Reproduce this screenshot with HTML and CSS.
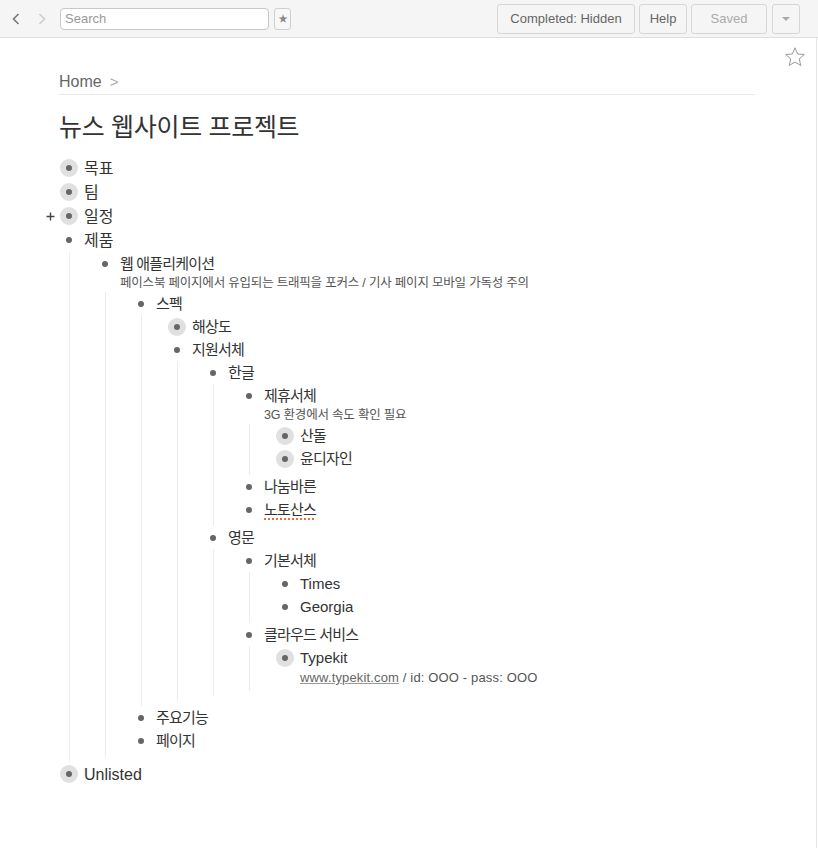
FILE: index.html
```html
<!DOCTYPE html>
<html lang="ko">
<head>
    <meta charset="UTF-8">
    <meta name="viewport" content="width=device-width, initial-scale=1.0">
    <title>뉴스 웹사이트 프로젝트</title>
    <link rel="stylesheet" href="styles.css">
</head>
<body>
    <div class="toolbar">
        <svg class="nav-arrow back" width="8" height="12" viewBox="0 0 8 12"><path d="M6.5 1 L1.5 6 L6.5 11" fill="none" stroke="#777" stroke-width="1.6"/></svg>
        <svg class="nav-arrow forward" width="8" height="12" viewBox="0 0 8 12"><path d="M1.5 1 L6.5 6 L1.5 11" fill="none" stroke="#ccc" stroke-width="1.6"/></svg>
        <input class="search" type="text" placeholder="Search">
        <button class="star-btn">★</button>
        <div class="toolbar-buttons">
            <button class="btn btn-completed">Completed: Hidden</button>
            <button class="btn btn-help">Help</button>
            <button class="btn btn-saved">Saved</button>
            <button class="btn btn-menu"><span class="caret"></span></button>
        </div>
    </div>

    <div class="page">
        <svg class="page-star" width="22" height="22" viewBox="0 0 22 22"><path d="M11 1.8 L13.6 8 L20.3 8.5 L15.2 12.9 L16.8 19.5 L11 16 L5.2 19.5 L6.8 12.9 L1.7 8.5 L8.4 8 Z" fill="none" stroke="#999" stroke-width="1" stroke-linejoin="round"/></svg>

        <div class="content">
            <div class="breadcrumb">
                <span class="crumb">Home</span><span class="crumb-sep">&gt;</span>
            </div>
            <h1 class="title">뉴스 웹사이트 프로젝트</h1>

            <div class="tree">
                <div class="item">
                    <div class="row"><span class="bullet collapsed"></span><span class="name">목표</span></div>
                </div>
                <div class="item">
                    <div class="row"><span class="bullet collapsed"></span><span class="name">팀</span></div>
                </div>
                <div class="item">
                    <div class="row">
                        <svg class="expand" width="9" height="9" viewBox="0 0 9 9"><path d="M4.5 0.5 V8.5 M0.5 4.5 H8.5" stroke="#444" stroke-width="1.4"/></svg>
                        <span class="bullet collapsed"></span><span class="name">일정</span>
                    </div>
                </div>
                <div class="item">
                    <div class="row"><span class="bullet"></span><span class="name">제품</span></div>
                    <div class="children">
                        <div class="item">
                            <div class="row"><span class="bullet"></span><span class="name">웹 애플리케이션</span></div>
                            <div class="note">페이스북 페이지에서 유입되는 트래픽을 포커스 / 기사 페이지 모바일 가독성 주의</div>
                            <div class="children">
                                <div class="item">
                                    <div class="row"><span class="bullet"></span><span class="name">스펙</span></div>
                                    <div class="children">
                                        <div class="item">
                                            <div class="row"><span class="bullet collapsed"></span><span class="name">해상도</span></div>
                                        </div>
                                        <div class="item">
                                            <div class="row"><span class="bullet"></span><span class="name">지원서체</span></div>
                                            <div class="children">
                                                <div class="item">
                                                    <div class="row"><span class="bullet"></span><span class="name">한글</span></div>
                                                    <div class="children">
                                                        <div class="item">
                                                            <div class="row"><span class="bullet"></span><span class="name">제휴서체</span></div>
                                                            <div class="note">3G 환경에서 속도 확인 필요</div>
                                                            <div class="children">
                                                                <div class="item">
                                                                    <div class="row"><span class="bullet collapsed"></span><span class="name">산돌</span></div>
                                                                </div>
                                                                <div class="item">
                                                                    <div class="row"><span class="bullet collapsed"></span><span class="name">윤디자인</span></div>
                                                                </div>
                                                            </div>
                                                        </div>
                                                        <div class="item">
                                                            <div class="row"><span class="bullet"></span><span class="name">나눔바른</span></div>
                                                        </div>
                                                        <div class="item">
                                                            <div class="row"><span class="bullet"></span><span class="name"><span class="misspelled">노토산스</span></span></div>
                                                        </div>
                                                    </div>
                                                </div>
                                                <div class="item">
                                                    <div class="row"><span class="bullet"></span><span class="name">영문</span></div>
                                                    <div class="children">
                                                        <div class="item">
                                                            <div class="row"><span class="bullet"></span><span class="name">기본서체</span></div>
                                                            <div class="children">
                                                                <div class="item">
                                                                    <div class="row"><span class="bullet"></span><span class="name latin">Times</span></div>
                                                                </div>
                                                                <div class="item">
                                                                    <div class="row"><span class="bullet"></span><span class="name latin">Georgia</span></div>
                                                                </div>
                                                            </div>
                                                        </div>
                                                        <div class="item">
                                                            <div class="row"><span class="bullet"></span><span class="name">클라우드 서비스</span></div>
                                                            <div class="children">
                                                                <div class="item">
                                                                    <div class="row"><span class="bullet collapsed"></span><span class="name latin">Typekit</span></div>
                                                                    <div class="note latin"><a class="note-link" href="#">www.typekit.com</a> / id: OOO - pass: OOO</div>
                                                                </div>
                                                            </div>
                                                        </div>
                                                    </div>
                                                </div>
                                            </div>
                                        </div>
                                    </div>
                                </div>
                                <div class="item">
                                    <div class="row"><span class="bullet"></span><span class="name">주요기능</span></div>
                                </div>
                                <div class="item">
                                    <div class="row"><span class="bullet"></span><span class="name">페이지</span></div>
                                </div>
                            </div>
                        </div>
                    </div>
                </div>
                <div class="item">
                    <div class="row"><span class="bullet collapsed"></span><span class="name latin">Unlisted</span></div>
                </div>
            </div>
        </div>
    </div>
</body>
</html>
```

FILE: styles.css
```css
body {
    font-family: 'Liberation Sans', 'Noto Sans CJK KR', Arial, sans-serif;
    color: #333;
    background-color: #fff;
    margin: 0;
    padding: 0;
}

/* top bar */

.toolbar {
    height: 37px;
    background-color: #f5f5f5;
    border-bottom: 1px solid #dedede;
    display: flex;
    align-items: center;
    padding: 0 18px 0 12px;
}

.nav-arrow {
    flex: none;
}

.nav-arrow.forward {
    margin-left: 18px;
}

.search {
    width: 209px;
    height: 22px;
    box-sizing: border-box;
    margin-left: 14px;
    padding: 0 4px;
    border: 1px solid #c8c8c8;
    border-radius: 4px;
    background-color: #fff;
    font-family: 'Liberation Sans', Arial, sans-serif;
    font-size: 13px;
    color: #333;
}

.search::placeholder {
    color: #999;
}

.star-btn {
    width: 17px;
    height: 22px;
    margin-left: 5px;
    padding: 0;
    border: 1px solid #cfcfcf;
    border-radius: 3px;
    background-color: #f7f7f7;
    color: #888;
    font-size: 10px;
    line-height: 20px;
}

.toolbar-buttons {
    margin-left: auto;
    display: flex;
    gap: 4px;
}

.btn {
    height: 30px;
    box-sizing: border-box;
    padding: 0;
    border: 1px solid #d6d6d6;
    border-radius: 3px;
    background-color: #f5f5f5;
    font-family: 'Liberation Sans', Arial, sans-serif;
    font-size: 13px;
    color: #666;
    text-align: center;
}

.btn-completed {
    width: 138px;
}

.btn-help {
    width: 48px;
}

.btn-saved {
    width: 76px;
    color: #aaa;
}

.btn-menu {
    width: 28px;
    margin-left: 1px;
    display: flex;
    align-items: center;
    justify-content: center;
}

.caret {
    width: 0;
    height: 0;
    border-left: 4px solid transparent;
    border-right: 4px solid transparent;
    border-top: 4px solid #aaa;
}

/* page */

.page {
    position: relative;
    width: 816px;
    min-height: calc(100vh - 38px);
    border-right: 1px solid #e4e4e4;
}

.page-star {
    position: absolute;
    top: 8px;
    right: 10px;
}

.content {
    width: 696px;
    padding: 34px 0 40px 59px;
}

.breadcrumb {
    height: 20px;
    line-height: 20px;
    padding-bottom: 2px;
    border-bottom: 1px solid #eaeaea;
    font-size: 16px;
}

.crumb {
    color: #666;
}

.crumb-sep {
    margin-left: 8px;
    color: #aaa;
    font-size: 15px;
}

.title {
    margin: 16px 0 0 0;
    font-size: 25px;
    line-height: 32px;
    font-weight: normal;
    letter-spacing: -0.3px;
    color: #333;
}

/* outline tree */

.tree {
    margin-top: 13px;
    margin-left: 1px;
}

.row {
    position: relative;
    display: flex;
    align-items: center;
    height: 23px;
}

.tree > .item > .row {
    height: 24px;
}

.expand {
    position: absolute;
    left: -14px;
    top: 8px;
}

.bullet {
    flex: none;
    width: 18px;
    height: 18px;
    border-radius: 50%;
    display: flex;
    align-items: center;
    justify-content: center;
}

.bullet::after {
    content: "";
    width: 6px;
    height: 6px;
    border-radius: 50%;
    background-color: #666;
}

.bullet.collapsed {
    background-color: #e0e0e0;
}

.name {
    margin-left: 6px;
    font-size: 15px;
    line-height: 23px;
    letter-spacing: -0.8px;
    white-space: nowrap;
    color: #333;
}

.tree > .item > .row .name {
    font-size: 16px;
    letter-spacing: 0;
}

.name.latin {
    font-size: 15px;
    letter-spacing: 0;
}

.tree > .item > .row .name.latin {
    font-size: 16px;
}

.misspelled {
    text-decoration: underline dotted #e8703c;
    text-decoration-thickness: 2px;
    text-underline-offset: 3px;
}

.note {
    margin-left: 24px;
    font-size: 12.5px;
    line-height: 17px;
    letter-spacing: -0.2px;
    color: #555;
    white-space: nowrap;
}

.note.latin {
    font-size: 13px;
    letter-spacing: 0.15px;
}

.note-link {
    color: #666;
    text-decoration: underline;
    text-decoration-color: #999;
}

.children {
    margin-left: 9px;
    padding-left: 26px;
    padding-bottom: 5px;
    border-left: 1px solid #ececec;
}
```
